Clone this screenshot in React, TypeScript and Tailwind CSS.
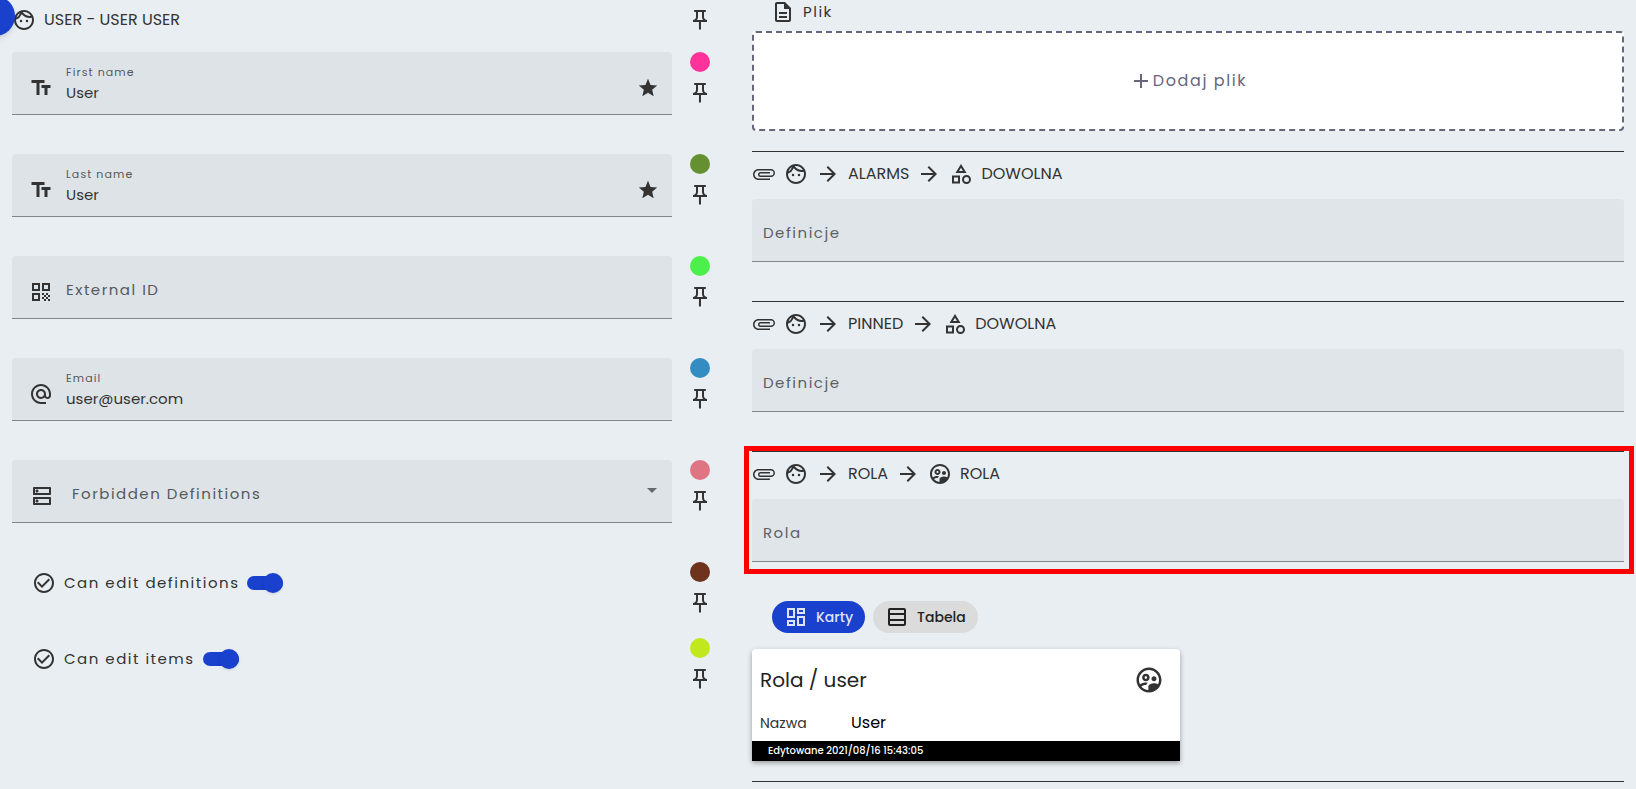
import type { ReactNode } from 'react';
import type { IconType } from 'react-icons';
import {
  MdAdd,
  MdAlternateEmail,
  MdArrowDropDown,
  MdArrowForward,
  MdAttachFile,
  MdCheckCircleOutline,
  MdOutlineCategory,
  MdOutlineDashboard,
  MdOutlineDescription,
  MdOutlineDns,
  MdOutlineFace,
  MdOutlinePushPin,
  MdOutlineSupervisedUserCircle,
  MdOutlineTableRows,
  MdQrCode,
  MdStar,
  MdTextFields,
} from 'react-icons/md';

function PinButton() {
  return (
    <button type="button" aria-label="Pin" className="flex size-6 items-center justify-center">
      <MdOutlinePushPin className="size-6" />
    </button>
  );
}

function Row({ dot, compact, children }: { dot: string; compact?: boolean; children: ReactNode }) {
  return (
    <div className={compact ? 'flex h-[76px] gap-4' : 'flex h-[102px] gap-4'}>
      <div className="min-w-0 flex-1">{children}</div>
      <div className="flex w-6 flex-col items-center gap-[9px]">
        <span className={`size-5 rounded-full ${dot}`} />
        <PinButton />
      </div>
    </div>
  );
}

function TextRow({
  id,
  dot,
  label,
  value,
  icon: Icon,
  starred,
}: {
  id: string;
  dot: string;
  label: string;
  value?: string;
  icon: IconType;
  starred?: boolean;
}) {
  return (
    <Row dot={dot}>
      <div className="flex h-[63px] gap-[13px] rounded-t border-b border-[#80868a] bg-[#dee3e7] pr-[13px] pl-[17px]">
        <Icon className="mt-6 size-6 shrink-0" />
        {value ? (
          <div className="flex min-w-0 flex-1 flex-col pt-3">
            <label htmlFor={id} className="text-[11px] leading-4 tracking-widest text-[#55595c]">
              {label}
            </label>
            <input id={id} defaultValue={value} className="h-6 w-full bg-transparent text-[15px] outline-none" />
          </div>
        ) : (
          <input
            id={id}
            aria-label={label}
            placeholder={label}
            className="mt-1.5 min-w-0 flex-1 bg-transparent text-[15px] tracking-widest outline-none placeholder:text-[#55595c]"
          />
        )}
        {starred && <MdStar className="mt-[25px] size-[22px] shrink-0" />}
      </div>
    </Row>
  );
}

function SwitchRow({ dot, label }: { dot: string; label: string }) {
  return (
    <Row dot={dot} compact>
      <label className="flex h-[42px] items-center gap-2 pl-5">
        <MdCheckCircleOutline className="size-6" />
        <span className="text-[15px] tracking-widest">{label}</span>
        <span className="relative flex h-5 w-9 items-center">
          <input type="checkbox" defaultChecked className="absolute inset-0 opacity-0" />
          <span className="h-[14px] w-full rounded-full bg-[#1941ce]" />
          <span className="absolute top-0 right-0 size-5 rounded-full bg-[#1941ce] shadow-sm" />
        </span>
      </label>
    </Row>
  );
}

function Relation({
  from,
  to,
  icon: Icon,
  label,
  framed,
}: {
  from: string;
  to: string;
  icon: IconType;
  label: string;
  framed?: boolean;
}) {
  return (
    <section className="relative mb-[39px]">
      <div className="border-t border-[#333] pt-[10px]">
        <h2 className="flex h-6 items-center gap-2 text-base">
          <MdAttachFile className="size-6 rotate-90" />
          <MdOutlineFace className="size-6" />
          <MdArrowForward className="size-6" />
          <span>{from}</span>
          <MdArrowForward className="size-6" />
          <Icon className="size-6" />
          <span>{to}</span>
        </h2>
        <input
          aria-label={label}
          placeholder={label}
          className="mt-[13px] block h-[63px] w-full rounded-t border-b border-[#80868a] bg-[#e0e5e9] px-[11px] pt-1 text-[15px] tracking-widest outline-none placeholder:text-[#5c6063]"
        />
      </div>
      {framed && (
        <div className="pointer-events-none absolute -top-[5px] -right-[10px] -bottom-3 -left-2 border-[5px] border-[#ff0000]" />
      )}
    </section>
  );
}

export default function App() {
  return (
    <main className="relative grid min-h-screen grid-cols-[740fr_896fr] overflow-hidden bg-[#e8eef2] font-[Poppins,Inter,sans-serif] text-[#333]">
      <div className="pr-7 pl-3">
        <header className="flex h-[52px] items-start gap-2 pt-2">
          <MdOutlineFace className="size-6" />
          <h1 className="flex-1 text-base leading-6">USER - USER USER</h1>
          <PinButton />
        </header>
        <TextRow id="first-name" dot="bg-[#ff3399]" label="First name" value="User" icon={MdTextFields} starred />
        <TextRow id="last-name" dot="bg-[#64902f]" label="Last name" value="User" icon={MdTextFields} starred />
        <TextRow id="external-id" dot="bg-[#4bf04b]" label="External ID" icon={MdQrCode} />
        <TextRow id="email" dot="bg-[#338dc2]" label="Email" value="user@user.com" icon={MdAlternateEmail} />
        <Row dot="bg-[#df7483]">
          <div className="relative flex h-[63px] rounded-t border-b border-[#80868a] bg-[#dee3e7]">
            <MdOutlineDns className="mt-6 ml-[18px] size-6 shrink-0" />
            <select
              aria-label="Forbidden Definitions"
              defaultValue=""
              className="mt-1.5 min-w-0 flex-1 appearance-none bg-transparent pl-[18px] text-[15px] tracking-widest text-[#55595c] outline-none"
            >
              <option value="">Forbidden Definitions</option>
            </select>
            <MdArrowDropDown className="pointer-events-none absolute top-[18px] right-2 size-6 text-[#666a6d]" />
          </div>
        </Row>
        <SwitchRow dot="bg-[#6e321d]" label="Can edit definitions" />
        <SwitchRow dot="bg-[#c0e81c]" label="Can edit items" />
      </div>

      <div className="px-3">
        <h2 className="flex h-[31px] items-start gap-2 pl-[19px]">
          <MdOutlineDescription className="size-6" />
          <span className="text-[15px] leading-6 tracking-widest">Plik</span>
        </h2>
        <button
          type="button"
          className="mb-5 flex h-[100px] w-full items-center justify-center rounded border-2 border-dashed border-[#66667d] bg-white text-base tracking-widest text-[#66667d]"
        >
          <MdAdd className="size-6" />
          Dodaj plik
        </button>

        <Relation from="ALARMS" to="DOWOLNA" icon={MdOutlineCategory} label="Definicje" />
        <Relation from="PINNED" to="DOWOLNA" icon={MdOutlineCategory} label="Definicje" />
        <Relation from="ROLA" to="ROLA" icon={MdOutlineSupervisedUserCircle} label="Rola" framed />

        <div className="flex gap-2 pl-5 text-sm font-medium">
          <button type="button" className="flex h-8 items-center gap-2 rounded-full bg-[#1941ce] px-3 text-[#dfe4f5]">
            <MdOutlineDashboard className="size-6" />
            Karty
          </button>
          <button type="button" className="flex h-8 items-center gap-2 rounded-full bg-[#dbdbdb] px-3 text-[#222]">
            <MdOutlineTableRows className="size-6" />
            Tabela
          </button>
        </div>

        <div className="mt-4 mb-5 grid grid-cols-2 gap-4">
          <article className="rounded-t bg-white shadow-[0_2px_5px_rgba(0,0,0,0.35)]">
            <div className="flex h-[62px] items-center justify-between pr-4 pl-2">
              <h3 className="text-xl text-[#222]">Rola / user</h3>
              <MdOutlineSupervisedUserCircle className="size-[30px]" />
            </div>
            <dl className="flex h-[30px] items-start pl-2 leading-6">
              <dt className="w-[91px] text-sm leading-6">Nazwa</dt>
              <dd className="text-base text-black">User</dd>
            </dl>
            <footer className="bg-black px-4 text-[10px] leading-5 font-medium text-white">
              Edytowane 2021/08/16 15:43:05
            </footer>
          </article>
        </div>
        <hr className="border-[#333]" />
      </div>

      <button
        type="button"
        aria-label="Menu"
        className="absolute -top-1 -left-[25px] size-10 rounded-full bg-[#1941ce] shadow-md"
      />
    </main>
  );
}
